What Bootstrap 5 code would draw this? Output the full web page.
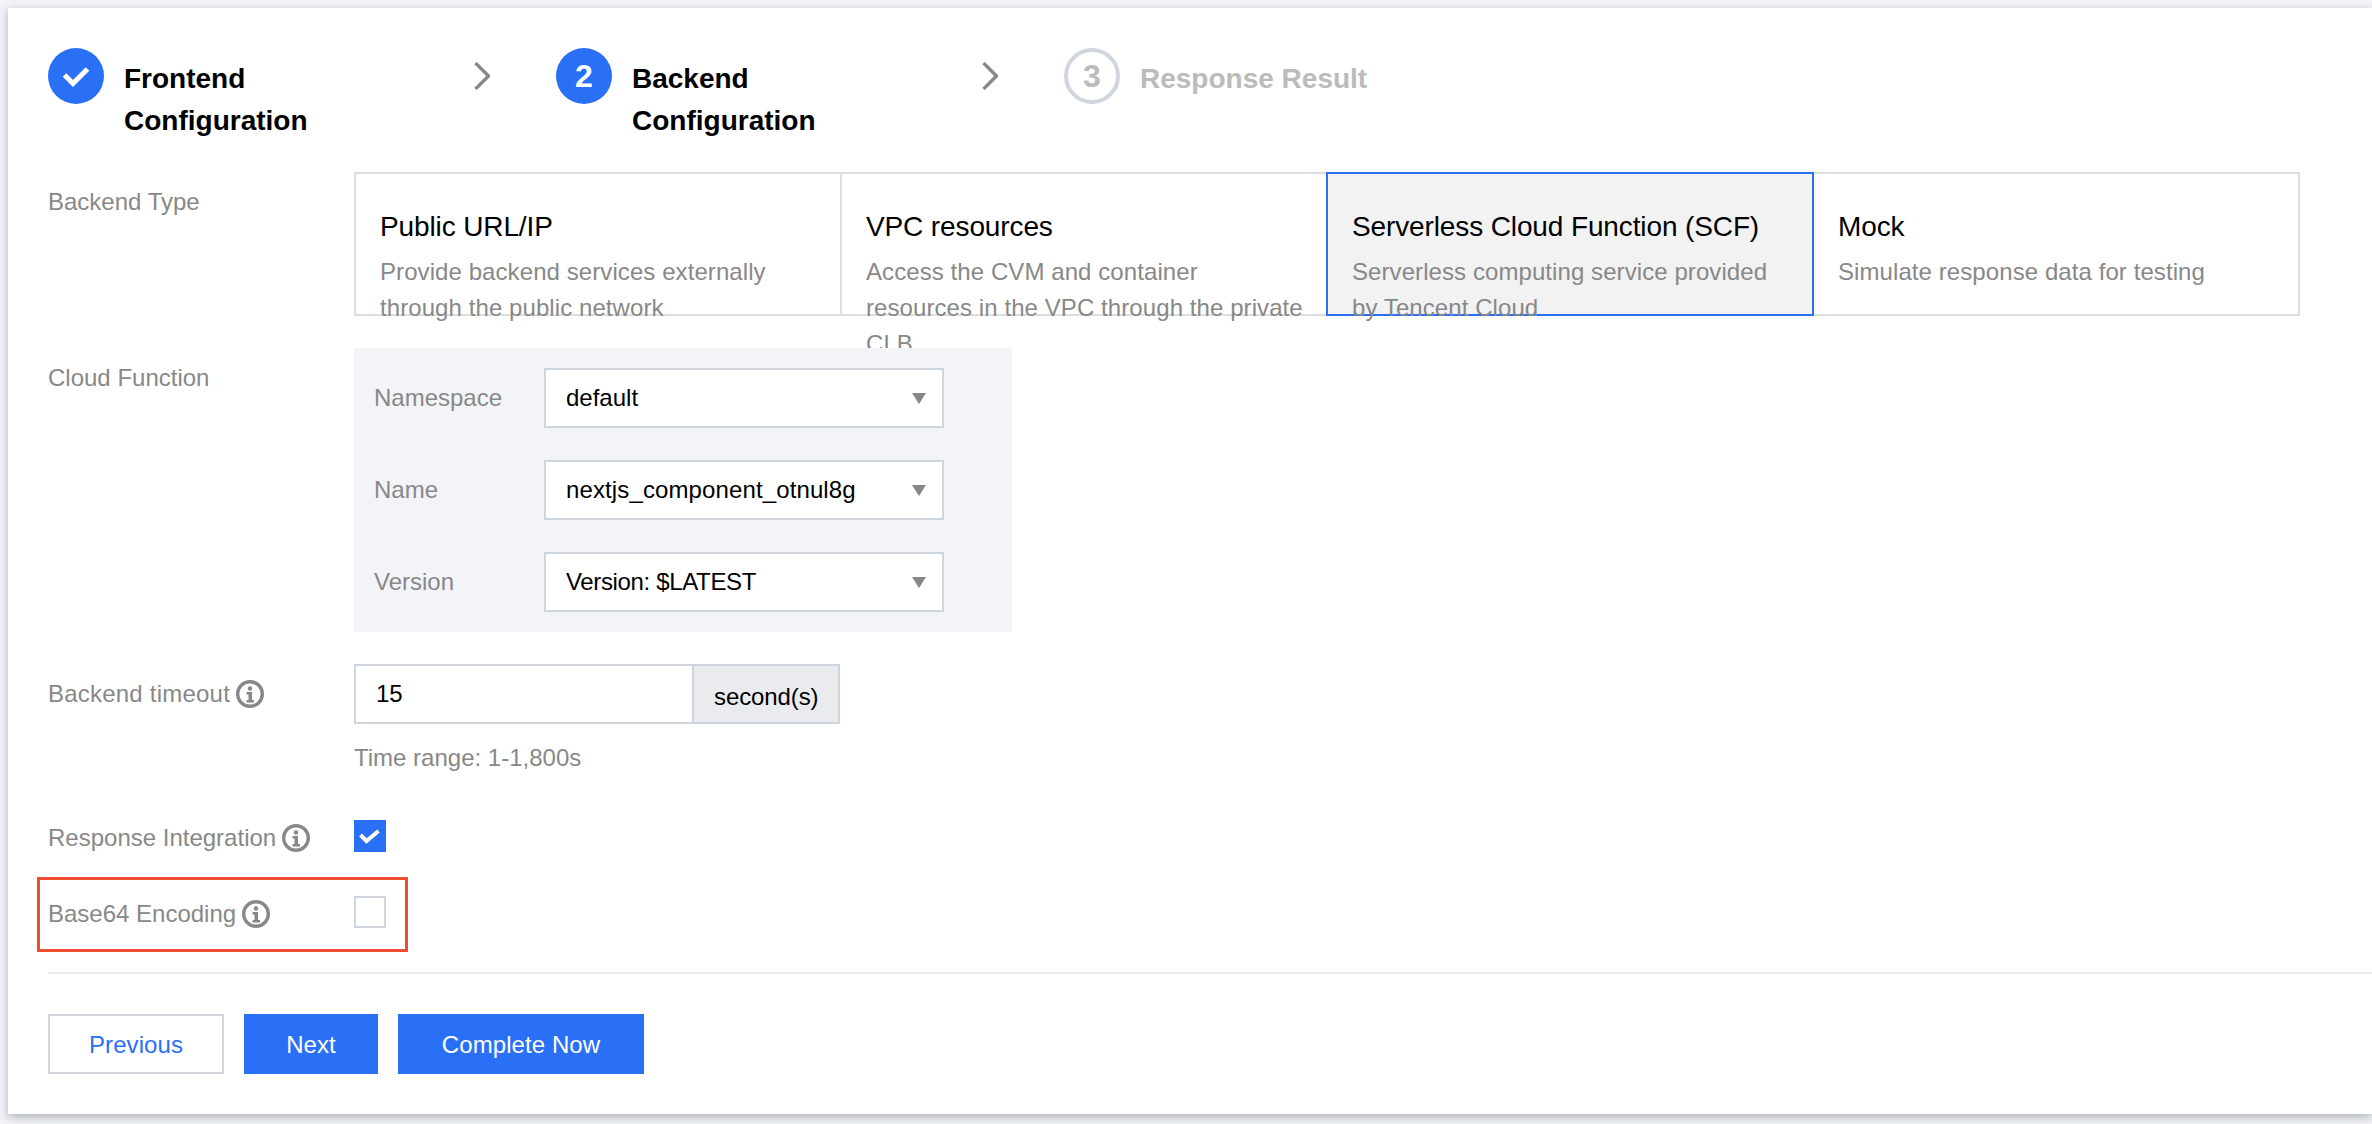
<!DOCTYPE html>
<html lang="en">
<head>
<meta charset="utf-8">
<title>Backend Configuration</title>
<link href="https://cdn.jsdelivr.net/npm/bootstrap@5.3.0/dist/css/bootstrap.min.css" rel="stylesheet">
<style>
html,body{height:100%;}
body{background:#f2f4f8;font-family:"Liberation Sans",Arial,sans-serif;font-size:24px;line-height:36px;color:#000;overflow:hidden;}
.sheet{margin:8px 0 0 8px;height:1106px;background:#fff;padding:40px 0 0 40px;box-shadow:0 3px 9px rgba(60,66,80,.38);}
.stepper{height:93px;margin-bottom:31px;}
.step-item{width:508px;flex:none;}
.step-dot{width:56px;height:56px;border-radius:50%;background:#2a70f6;color:#fff;font-weight:700;font-size:32px;line-height:56px;text-align:center;flex:none;}
.step-dot svg{display:block;}
.step-dot.todo{background:#fff;border:4px solid #d0d6e0;color:#bbb;line-height:48px;}
.step-name{width:302px;margin-left:20px;padding-top:10px;font-size:28px;line-height:42px;font-weight:700;flex:none;}
.step-name.todo{color:#bbb;}
.step-arrow{margin-left:48px;margin-top:14px;flex:none;}
.form-line{display:flex;}
.form-name{width:306px;flex:none;padding-top:12px;color:#888;display:flex;align-items:flex-start;gap:6px;}
.form-name svg{margin-top:4px;flex:none;}
.type-row{height:144px;margin-bottom:32px;}
.type-box{width:488px;height:144px;flex:none;border:2px solid #ddd;margin-right:-2px;padding:32px 21px 0 24px;position:relative;background:#fff;}
.type-box.chosen{border-color:#2a70f6;background:#f2f2f2;z-index:1;}
.type-title{font-size:28px;line-height:42px;margin-bottom:6px;letter-spacing:-.12px;}
.type-desc{color:#888;line-height:36px;letter-spacing:.08px;}
.fn-box{width:658px;height:284px;background:#f2f4f8;padding:20px;position:relative;z-index:2;display:flex;flex-direction:column;gap:32px;margin-bottom:32px;}
.fn-name{width:170px;flex:none;color:#888;}
.form-select.fn-select{width:400px;height:60px;border:2px solid #cfd5de;border-radius:0;padding:0 40px 0 20px;font-size:24px;line-height:36px;color:#000;background-color:#fff;background-image:url("data:image/svg+xml,%3Csvg xmlns='http://www.w3.org/2000/svg' viewBox='0 0 14 11'%3E%3Cpath d='M0 0h14L7 11z' fill='%23888'/%3E%3C/svg%3E");background-size:14px 11px;background-position:right 16px center;box-shadow:none;}
.form-select.fn-select.wide-text{letter-spacing:.12px;}
.form-select.fn-select.tight-text{letter-spacing:-.35px;}
.time-group{width:486px;height:60px;flex-wrap:nowrap;}
.time-group .form-control{height:60px;border:2px solid #cfd5de;border-right-width:0;border-radius:0;padding:0 20px;font-size:24px;line-height:36px;color:#000;box-shadow:none;}
.time-group .input-group-text{height:60px;width:148px;margin-left:0!important;border:2px solid #cfd5de;border-radius:0;background:#e9ebef;color:#000;font-size:24px;padding:6px 0 0 20px;letter-spacing:-.1px;}
.hint{color:#888;margin-top:16px;line-height:36px;}
.name-text.stretch{letter-spacing:.22px;}
.time-row{margin-bottom:44px;}
.tick{width:32px;height:32px;display:block;flex:none;border:2px solid #cfd5de;background:#fff;}
.tick.on{border-color:#2a70f6;background:#2a70f6;}
.short-name{padding-top:0;height:36px;}
.check-row{height:32px;margin-bottom:44px;position:relative;}
.mark-box{position:absolute;left:-11px;top:-19px;width:371px;height:75px;border:3px solid #f04c30;pointer-events:none;}
.rule{height:2px;background:#e7eaef;margin-bottom:40px;}
.act-row{gap:20px;}
.act{height:60px;border-radius:0;font-size:24px;line-height:36px;padding:11px 0 9px;border-width:2px;letter-spacing:.08px;}
.act.back{width:176px;color:#2a70f6;border-color:#cfd5de;background:#fff;}
.act.go{background:#2a70f6;border-color:#2a70f6;color:#fff;}
.act.next{width:134px;}
.act.done{width:246px;}
</style>
</head>
<body>
<div class="sheet">
  <div class="stepper d-flex">
    <div class="step-item d-flex">
      <div class="step-dot"><svg width="56" height="56" viewBox="0 0 56 56"><path d="M16.5 27l8.5 8.5L39.5 21" fill="none" stroke="#fff" stroke-width="5"/></svg></div>
      <div class="step-name">Frontend Configuration</div>
      <svg class="step-arrow" width="16" height="28" viewBox="0 0 16 28"><path d="M1.5 1l13 13-13 13" fill="none" stroke="#888" stroke-width="3.4"/></svg>
    </div>
    <div class="step-item d-flex">
      <div class="step-dot">2</div>
      <div class="step-name">Backend Configuration</div>
      <svg class="step-arrow" width="16" height="28" viewBox="0 0 16 28"><path d="M1.5 1l13 13-13 13" fill="none" stroke="#888" stroke-width="3.4"/></svg>
    </div>
    <div class="step-item d-flex">
      <div class="step-dot todo">3</div>
      <div class="step-name todo">Response Result</div>
    </div>
  </div>

  <div class="form-line type-row">
    <div class="form-name">Backend Type</div>
    <div class="type-box"><div class="type-title">Public URL/IP</div><div class="type-desc">Provide backend services externally through the public network</div></div>
    <div class="type-box"><div class="type-title">VPC resources</div><div class="type-desc">Access the CVM and container resources in the VPC through the private CLB</div></div>
    <div class="type-box chosen"><div class="type-title">Serverless Cloud Function (SCF)</div><div class="type-desc">Serverless computing service provided by Tencent Cloud</div></div>
    <div class="type-box"><div class="type-title">Mock</div><div class="type-desc">Simulate response data for testing</div></div>
  </div>

  <div class="form-line">
    <div class="form-name">Cloud Function</div>
    <div class="fn-box">
      <div class="d-flex align-items-center"><div class="fn-name">Namespace</div><select class="form-select fn-select"><option>default</option></select></div>
      <div class="d-flex align-items-center"><div class="fn-name">Name</div><select class="form-select fn-select wide-text"><option>nextjs_component_otnul8g</option></select></div>
      <div class="d-flex align-items-center"><div class="fn-name">Version</div><select class="form-select fn-select tight-text"><option>Version: $LATEST</option></select></div>
    </div>
  </div>

  <div class="form-line time-row">
    <div class="form-name"><span class="name-text stretch">Backend timeout</span>
      <svg width="28" height="28" viewBox="0 0 28 28"><circle cx="14" cy="14" r="12.3" fill="none" stroke="#888" stroke-width="3.4"/><circle cx="14" cy="8.5" r="2.2" fill="#888"/><path d="M10.5 12H16V20H18V22.5H10.5V20H12.5V14.5H10.5z" fill="#888"/></svg>
    </div>
    <div>
      <div class="input-group time-group"><input class="form-control" type="text" value="15"><span class="input-group-text">second(s)</span></div>
      <div class="hint">Time range: 1-1,800s</div>
    </div>
  </div>

  <div class="form-line check-row">
    <div class="form-name short-name"><span class="name-text">Response Integration</span>
      <svg width="28" height="28" viewBox="0 0 28 28"><circle cx="14" cy="14" r="12.3" fill="none" stroke="#888" stroke-width="3.4"/><circle cx="14" cy="8.5" r="2.2" fill="#888"/><path d="M10.5 12H16V20H18V22.5H10.5V20H12.5V14.5H10.5z" fill="#888"/></svg>
    </div>
    <span class="tick on"><svg class="d-block" width="28" height="28" viewBox="0 0 28 28"><path d="M4.5 13l6 6L22.5 9" fill="none" stroke="#fff" stroke-width="4"/></svg></span>
  </div>

  <div class="form-line check-row">
    <div class="mark-box"></div>
    <div class="form-name short-name"><span class="name-text">Base64 Encoding</span>
      <svg width="28" height="28" viewBox="0 0 28 28"><circle cx="14" cy="14" r="12.3" fill="none" stroke="#888" stroke-width="3.4"/><circle cx="14" cy="8.5" r="2.2" fill="#888"/><path d="M10.5 12H16V20H18V22.5H10.5V20H12.5V14.5H10.5z" fill="#888"/></svg>
    </div>
    <span class="tick"></span>
  </div>

  <div class="rule"></div>
  <div class="d-flex act-row">
    <button type="button" class="btn act back">Previous</button>
    <button type="button" class="btn act go next">Next</button>
    <button type="button" class="btn act go done">Complete Now</button>
  </div>
</div>
<script src="https://cdn.jsdelivr.net/npm/bootstrap@5.3.0/dist/js/bootstrap.bundle.min.js"></script>
</body>
</html>
